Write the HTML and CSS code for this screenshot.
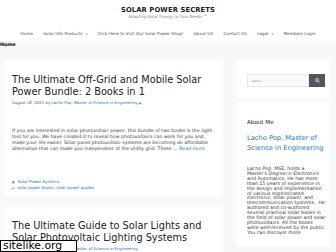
FILE: index.html
```html
<!DOCTYPE html>
<html>
<head>
    <title>Solar Power Secrets</title>
    <link rel="stylesheet" href="styles.css">
</head>
<body>
    <header class="site-header">
        <div class="branding">
            <p class="site-title">SOLAR POWER SECRETS</p>
            <p class="site-tagline">Adapting Solar Energy to Your Needs &trade;</p>
        </div>
        <nav class="main-nav">
            <ul>
                <li><a href="#">Home</a></li>
                <li><a href="#">Solar Info Products <span class="caret">&#9662;</span></a></li>
                <li><a href="#">Click Here to Visit Our Solar Power Shop!</a></li>
                <li><a href="#">About US</a></li>
                <li><a href="#">Contact US</a></li>
                <li><a href="#">Legal <span class="caret">&#9662;</span></a></li>
                <li><a href="#">Members Login</a></li>
            </ul>
        </nav>
    </header>

    <div class="breadcrumb">Home</div>

    <div class="site-content">
        <main class="content-area">
            <article class="post">
                <h2 class="entry-title">The Ultimate Off-Grid and Mobile Solar Power Bundle: 2 Books in 1</h2>
                <div class="entry-meta">August 18, 2021 by <a href="#">Lacho Pop, Master of Science in Engineering</a> <span class="meta-icon">&#9679;</span></div>
                <p class="entry-summary">If you are interested in solar photovoltaic power, this bundle of two books is the right tool for you. We have created it to reveal how photovoltaics can work for you and make your life easier. Solar panel photovoltaic systems are becoming an affordable alternative that can make you independent of the utility grid. These &hellip; <a href="#">Read more</a></p>
                <footer class="entry-footer">
                    <div class="cat-links"><span class="foot-icon">&#9632;</span><a href="#">Solar Power Systems</a></div>
                    <div class="tag-links"><span class="foot-icon">&#9670;</span><a href="#">solar power books</a>, <a href="#">solar power guides</a></div>
                </footer>
            </article>
            <article class="post">
                <h2 class="entry-title">The Ultimate Guide to Solar Lights and Solar Photovoltaic Lighting Systems</h2>
                <div class="entry-meta">August 18, 2021 by <a href="#">Lacho Pop, Master of Science in Engineering</a></div>
            </article>
        </main>

        <aside class="sidebar">
            <div class="widget search-widget">
                <form class="search-form">
                    <input type="search" class="search-field" placeholder="Search &hellip;">
                    <button type="button" class="search-submit">
                        <svg width="5" height="5" viewBox="0 0 10 10"><circle cx="4" cy="4" r="3" fill="none" stroke="#fff" stroke-width="1.4"/><line x1="6.2" y1="6.2" x2="9" y2="9" stroke="#fff" stroke-width="1.4"/></svg>
                    </button>
                </form>
            </div>
            <div class="widget">
                <h3 class="widget-title">About Me</h3>
                <p class="about-name"><a href="#">Lacho Pop, Master of Science in Engineering</a></p>
                <p class="about-text">Lacho Pop, MSE, holds a Master's Degree in Electronics and Automatics. He has more than 15 years of experience in the design and implementation of various sophisticated electronic, solar power, and telecommunication systems.&nbsp; He authored and co-authored several practical solar books in the field of solar power and solar photovoltaics. All the books were well-received by the public. You can discover more</p>
            </div>
        </aside>
    </div>

    <div class="watermark">sitelike.org</div>
</body>
</html>
```

FILE: styles.css
```css
body {
    font-family: "DejaVu Sans", sans-serif;
    margin: 0;
    padding: 0;
    background-color: #f7f8f9;
    color: #3a3a3a;
    height: 252px;
    overflow: hidden;
}
a {
    color: #1e73be;
    text-decoration: none;
}
p {
    margin: 0;
}
.site-header {
    background-color: #fff;
}
.branding {
    text-align: center;
    padding-top: 6px;
}
.site-title {
    font-weight: bold;
    font-size: 6.8px;
    line-height: 8px;
    color: #222;
    letter-spacing: 0.1px;
}
.site-tagline {
    font-size: 4px;
    line-height: 4px;
    color: #888;
    margin-top: 1px;
}
.main-nav ul {
    list-style: none;
    margin: 0;
    padding: 0;
    display: flex;
    justify-content: center;
    height: 16px;
    align-items: center;
    padding-top: 6px;
}
.main-nav a {
    display: block;
    color: #515151;
    font-size: 4.2px;
    padding: 0 5.2px;
}
.caret {
    font-size: 2.8px;
    margin-left: 2px;
}
.breadcrumb {
    font-size: 4.8px;
    font-weight: bold;
    color: #000;
    padding: 1px 0 0 0;
    height: 11px;
}
.site-content {
    display: flex;
    padding: 7px 6px 0 4px;
    gap: 13px;
}
.content-area {
    width: 219px;
    flex-shrink: 0;
}
.post {
    background-color: #fff;
    padding: 14px 8px 6px 8px;
    margin-bottom: 9px;
}
.entry-title {
    margin: 0;
    font-weight: normal;
    font-size: 9.75px;
    line-height: 12px;
    color: #222;
    max-width: 205px;
}
.entry-meta {
    font-size: 3.9px;
    line-height: 4px;
    color: #595959;
    margin-top: 3px;
}
.meta-icon {
    color: #1e73be;
    font-size: 2.5px;
}
.entry-summary {
    font-size: 4.7px;
    line-height: 6px;
    margin-top: 22px;
}
.entry-footer {
    font-size: 4px;
    line-height: 5px;
    margin-top: 27px;
}
.foot-icon {
    color: #888;
    font-size: 2.8px;
    margin-right: 3px;
}
.sidebar {
    width: 94px;
    flex-shrink: 0;
}
.widget {
    background-color: #fff;
    padding: 11px 4.4px 10px 11px;
    margin-bottom: 5px;
}
.search-widget {
    padding-top: 14px;
}
.search-form {
    display: flex;
    height: 13px;
}
.search-field {
    width: 62px;
    box-sizing: border-box;
    border: 1px solid #e6e6e6;
    background-color: #fafafa;
    font-family: "DejaVu Sans", sans-serif;
    font-size: 3px;
    padding: 0 3px;
    margin: 0;
    outline: none;
}
.search-field::placeholder {
    color: #999;
}
.search-submit {
    width: 16px;
    border: none;
    margin: 0;
    padding: 0;
    background-color: #55555e;
    display: flex;
    align-items: center;
    justify-content: center;
}
.widget-title {
    margin: 7px 0 0 0;
    font-size: 5.6px;
    line-height: 5px;
    font-weight: normal;
    color: #222;
}
.about-name {
    font-size: 6.7px;
    line-height: 10px;
    margin-top: 8px;
}
.about-text {
    font-size: 4.75px;
    line-height: 4.9px;
    margin-top: 14px;
    color: #3a3a3a;
}
.watermark {
    position: absolute;
    left: 0;
    top: 240px;
    width: 77px;
    height: 12px;
    box-sizing: border-box;
    border: 1px solid #000;
    background-color: #fff;
    font-size: 10.8px;
    line-height: 10px;
    padding-left: 2px;
    color: #000;
}
```
